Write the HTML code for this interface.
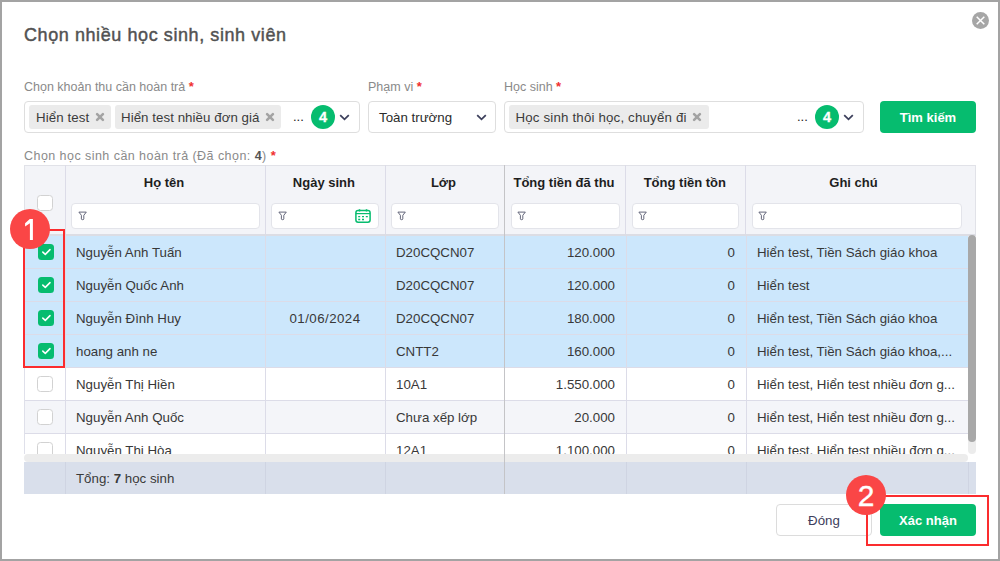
<!DOCTYPE html><html><head><meta charset="utf-8"><style>
*{box-sizing:border-box;margin:0;padding:0}
html,body{width:1000px;height:561px;overflow:hidden;background:#fff}
body{font-family:"Liberation Sans",sans-serif;position:relative;color:#333}
.a{position:absolute;white-space:nowrap}
.frame{position:absolute;left:0;top:0;width:1000px;height:561px;border:2px solid #a3a3a3;z-index:50}
.lbl{font-size:12.5px;color:#8a8a8a}
.req{color:#f0302f;font-weight:700;font-size:13px}
.box{position:absolute;border:1px solid #dedede;border-radius:4px;background:#fff}
.tag{position:absolute;height:24px;background:#ebebeb;border-radius:3px}
.tt{position:absolute;font-size:13.3px;color:#3b3b3b;line-height:16px;white-space:nowrap}
.badge{position:absolute;width:24px;height:24px;border-radius:50%;background:#06bc6f;color:#fff;font-weight:700;font-size:14.5px;text-align:center;line-height:25px;-webkit-text-stroke:0.3px #fff}
.btn{position:absolute;border-radius:4px;background:#06bc6f;color:#fff;font-weight:700;font-size:13px;text-align:center}
.hc{position:absolute;font-size:13px;font-weight:700;color:#1e1e1e;text-align:center;line-height:16px;white-space:nowrap}
.fi{position:absolute;height:26px;background:#fff;border:1px solid #e3e4ea;border-radius:4px}
.vl{position:absolute;width:1px;background:#dcdce8}
.hl{position:absolute;height:1px;background:#dcdce8}
.c{position:absolute;font-size:13.3px;color:#383838;white-space:nowrap;line-height:16px}
.cb{position:absolute;width:16px;height:16px;border-radius:3.5px}
.on{background:#06bc6f}
.off{background:#fff;border:1px solid #d2d2d2}
</style></head><body>
<div class="frame"></div>
<div class="a" style="left:24px;top:25px;font-size:18px;font-weight:400;color:#525252;letter-spacing:0.58px;line-height:20px;-webkit-text-stroke:0.45px #525252">Chọn nhiều học sinh, sinh viên</div>
<div class="a" style="left:971.5px;top:12px;width:17px;height:17px;border-radius:50%;background:#a6a6a6"><svg width="17" height="17" viewBox="0 0 17 17" style="position:absolute;left:0;top:0"><path d="M4.7 4.7L12.3 12.3M12.3 4.7L4.7 12.3" stroke="#fff" stroke-width="1.5"/></svg></div>
<div class="a lbl" style="left:24px;top:80px;line-height:14px">Chọn khoản thu cần hoàn trả <span class="req">*</span></div>
<div class="a lbl" style="left:368px;top:80px;line-height:14px">Phạm vi <span class="req">*</span></div>
<div class="a lbl" style="left:504px;top:80px;line-height:14px">Học sinh <span class="req">*</span></div>
<div class="box" style="left:24px;top:101px;width:336px;height:32px">
<div class="tag" style="left:4px;top:3px;width:82px"><div class="tt" style="left:7px;top:5px;letter-spacing:0.1px">Hiển test</div><svg width="10" height="10" viewBox="0 0 10 10" style="position:absolute;left:65.5px;top:7px"><path d="M2.1 2.1L7.9 7.9M7.9 2.1L2.1 7.9" stroke="#a3a3a3" stroke-width="2.6" stroke-linecap="round"/></svg></div>
<div class="tag" style="left:90px;top:3px;width:166px"><div class="tt" style="left:6px;top:5px;letter-spacing:0.05px">Hiển test nhiều đơn giá</div><svg width="10" height="10" viewBox="0 0 10 10" style="position:absolute;left:149.75px;top:7px"><path d="M2.1 2.1L7.9 7.9M7.9 2.1L2.1 7.9" stroke="#a3a3a3" stroke-width="2.6" stroke-linecap="round"/></svg></div>
<div class="a" style="left:268px;top:7px;font-size:13px;color:#1a1a1a;line-height:16px">...</div>
<div class="badge" style="left:286px;top:3px">4</div>
<svg width="11" height="7" viewBox="0 0 11 7" style="position:absolute;left:314.2px;top:11.8px"><path d="M1.2 1.2L5.5 5.3L9.8 1.2" fill="none" stroke="#3d405c" stroke-width="1.8"/></svg>
</div>
<div class="box" style="left:368px;top:101px;width:128px;height:32px">
<div class="tt" style="left:10px;top:8px;color:#2b2b2b">Toàn trường</div>
<svg width="11" height="7" viewBox="0 0 11 7" style="position:absolute;left:106.5px;top:11.8px"><path d="M1.2 1.2L5.5 5.3L9.8 1.2" fill="none" stroke="#3d405c" stroke-width="1.8"/></svg>
</div>
<div class="box" style="left:504px;top:101px;width:360px;height:32px">
<div class="tag" style="left:4px;top:3px;width:200px"><div class="tt" style="left:6.5px;top:5px;letter-spacing:0.17px">Học sinh thôi học, chuyển đi</div><svg width="10" height="10" viewBox="0 0 10 10" style="position:absolute;left:183.2px;top:7px"><path d="M2.1 2.1L7.9 7.9M7.9 2.1L2.1 7.9" stroke="#a3a3a3" stroke-width="2.6" stroke-linecap="round"/></svg></div>
<div class="a" style="left:292px;top:7px;font-size:13px;color:#1a1a1a;line-height:16px">...</div>
<div class="badge" style="left:310px;top:3px">4</div>
<svg width="11" height="7" viewBox="0 0 11 7" style="position:absolute;left:338.2px;top:11.8px"><path d="M1.2 1.2L5.5 5.3L9.8 1.2" fill="none" stroke="#3d405c" stroke-width="1.8"/></svg>
</div>
<div class="btn" style="left:880px;top:101px;width:96px;height:32px;line-height:34px">Tìm kiếm</div>
<div class="a lbl" style="left:24px;top:149px;line-height:14px;letter-spacing:0.45px">Chọn học sinh cần hoàn trả (Đã chọn: <b style="color:#555">4</b>) <span class="req">*</span></div>
<div class="a" style="left:24px;top:165px;width:952px;height:71px;background:#f3f4f8;border-top:1px solid #e1e2e8;border-left:1px solid #e1e2e8;border-right:1px solid #e1e2e8;border-bottom:2px solid #dcdde4"></div>
<div class="vl" style="left:65.0px;top:165px;height:69px"></div>
<div class="vl" style="left:265.0px;top:165px;height:69px"></div>
<div class="vl" style="left:384.8px;top:165px;height:69px"></div>
<div class="vl" style="left:504.1px;top:165px;height:69px"></div>
<div class="vl" style="left:625.0px;top:165px;height:69px"></div>
<div class="vl" style="left:745.0px;top:165px;height:69px"></div>
<div class="cb off" style="left:37px;top:195px;width:16px;height:16px"></div>
<div class="hc" style="left:64.0px;top:175px;width:200.0px">Họ tên</div>
<div class="hc" style="left:264.0px;top:175px;width:119.8px">Ngày sinh</div>
<div class="hc" style="left:383.8px;top:175px;width:119.3px">Lớp</div>
<div class="hc" style="left:503.1px;top:175px;width:121.8px">Tổng tiền đã thu</div>
<div class="hc" style="left:624.9px;top:175px;width:119.9px">Tổng tiền tồn</div>
<div class="hc" style="left:744.8px;top:175px;width:217.4px">Ghi chú</div>
<div class="fi" style="left:71.4px;top:203px;width:188.2px"><svg width="10" height="10" viewBox="0 0 10 10" style="position:absolute;left:5.5px;top:7.3px"><path d="M0.9 1.1H8.3L5.8 4.3V7.9Q5.8 8.7 4.6 8.7Q3.4 8.7 3.4 7.9V4.3Z" fill="none" stroke="#5c5f74" stroke-width="0.95" stroke-linejoin="round"/></svg></div>
<div class="fi" style="left:271.4px;top:203px;width:108.1px"><svg width="10" height="10" viewBox="0 0 10 10" style="position:absolute;left:5.5px;top:7.3px"><path d="M0.9 1.1H8.3L5.8 4.3V7.9Q5.8 8.7 4.6 8.7Q3.4 8.7 3.4 7.9V4.3Z" fill="none" stroke="#5c5f74" stroke-width="0.95" stroke-linejoin="round"/></svg></div>
<div class="fi" style="left:390.8px;top:203px;width:108.2px"><svg width="10" height="10" viewBox="0 0 10 10" style="position:absolute;left:5.5px;top:7.3px"><path d="M0.9 1.1H8.3L5.8 4.3V7.9Q5.8 8.7 4.6 8.7Q3.4 8.7 3.4 7.9V4.3Z" fill="none" stroke="#5c5f74" stroke-width="0.95" stroke-linejoin="round"/></svg></div>
<div class="fi" style="left:510.5px;top:203px;width:109.3px"><svg width="10" height="10" viewBox="0 0 10 10" style="position:absolute;left:5.5px;top:7.3px"><path d="M0.9 1.1H8.3L5.8 4.3V7.9Q5.8 8.7 4.6 8.7Q3.4 8.7 3.4 7.9V4.3Z" fill="none" stroke="#5c5f74" stroke-width="0.95" stroke-linejoin="round"/></svg></div>
<div class="fi" style="left:631.8px;top:203px;width:107.6px"><svg width="10" height="10" viewBox="0 0 10 10" style="position:absolute;left:5.5px;top:7.3px"><path d="M0.9 1.1H8.3L5.8 4.3V7.9Q5.8 8.7 4.6 8.7Q3.4 8.7 3.4 7.9V4.3Z" fill="none" stroke="#5c5f74" stroke-width="0.95" stroke-linejoin="round"/></svg></div>
<div class="fi" style="left:751.8px;top:203px;width:210.4px"><svg width="10" height="10" viewBox="0 0 10 10" style="position:absolute;left:5.5px;top:7.3px"><path d="M0.9 1.1H8.3L5.8 4.3V7.9Q5.8 8.7 4.6 8.7Q3.4 8.7 3.4 7.9V4.3Z" fill="none" stroke="#5c5f74" stroke-width="0.95" stroke-linejoin="round"/></svg></div>
<svg width="16" height="14" viewBox="0 0 16 14" style="position:absolute;left:355px;top:209px"><rect x="0.9" y="1.6" width="14.2" height="11.6" rx="2.2" fill="none" stroke="#06bc6f" stroke-width="1.5"/><path d="M0.9 4.6H15.1" stroke="#06bc6f" stroke-width="1.2"/><path d="M4.5 0.3V2.5M11.5 0.3V2.5" stroke="#06bc6f" stroke-width="1.5"/><path d="M3.2 7.6H5.2M7 7.6H9M10.8 7.6H12.8M3.2 10.5H5.2M7 10.5H9" stroke="#06bc6f" stroke-width="1.3"/></svg>
<div class="a" style="left:24px;top:236px;width:944px;height:218px;overflow:hidden">
<div class="a" style="left:0;top:0.0px;width:944px;height:33px;background:#cce7fc"></div>
<div class="hl" style="left:0;top:32.0px;width:944px"></div>
<div class="cb on" style="left:14px;top:8.0px"><svg width="16" height="16" viewBox="0 0 16 16" style="position:absolute;left:0;top:0"><path d="M4.8 8.1L7.3 10.4L12 5.6" fill="none" stroke="#fff" stroke-width="1.55" stroke-linecap="round" stroke-linejoin="round"/></svg></div>
<div class="c" style="left:52px;top:9.0px">Nguyễn Anh Tuấn</div>
<div class="c" style="left:372px;top:9.0px">D20CQCN07</div>
<div class="c" style="left:480px;top:9.0px;width:111px;text-align:right">120.000</div>
<div class="c" style="left:602px;top:9.0px;width:109px;text-align:right">0</div>
<div class="c" style="left:733px;top:9.0px">Hiển test, Tiền Sách giáo khoa</div>
<div class="a" style="left:0;top:32.5px;width:944px;height:33px;background:#cce7fc"></div>
<div class="hl" style="left:0;top:64.5px;width:944px"></div>
<div class="cb on" style="left:14px;top:40.5px"><svg width="16" height="16" viewBox="0 0 16 16" style="position:absolute;left:0;top:0"><path d="M4.8 8.1L7.3 10.4L12 5.6" fill="none" stroke="#fff" stroke-width="1.55" stroke-linecap="round" stroke-linejoin="round"/></svg></div>
<div class="c" style="left:52px;top:41.5px">Nguyễn Quốc Anh</div>
<div class="c" style="left:372px;top:41.5px">D20CQCN07</div>
<div class="c" style="left:480px;top:41.5px;width:111px;text-align:right">120.000</div>
<div class="c" style="left:602px;top:41.5px;width:109px;text-align:right">0</div>
<div class="c" style="left:733px;top:41.5px">Hiển test</div>
<div class="a" style="left:0;top:65.5px;width:944px;height:33px;background:#cce7fc"></div>
<div class="hl" style="left:0;top:97.5px;width:944px"></div>
<div class="cb on" style="left:14px;top:73.5px"><svg width="16" height="16" viewBox="0 0 16 16" style="position:absolute;left:0;top:0"><path d="M4.8 8.1L7.3 10.4L12 5.6" fill="none" stroke="#fff" stroke-width="1.55" stroke-linecap="round" stroke-linejoin="round"/></svg></div>
<div class="c" style="left:52px;top:74.5px">Nguyễn Đình Huy</div>
<div class="c" style="left:241px;top:74.5px;width:120px;text-align:center;letter-spacing:0.45px">01/06/2024</div>
<div class="c" style="left:372px;top:74.5px">D20CQCN07</div>
<div class="c" style="left:480px;top:74.5px;width:111px;text-align:right">180.000</div>
<div class="c" style="left:602px;top:74.5px;width:109px;text-align:right">0</div>
<div class="c" style="left:733px;top:74.5px">Hiển test, Tiền Sách giáo khoa</div>
<div class="a" style="left:0;top:98.5px;width:944px;height:33px;background:#cce7fc"></div>
<div class="hl" style="left:0;top:130.5px;width:944px"></div>
<div class="cb on" style="left:14px;top:106.5px"><svg width="16" height="16" viewBox="0 0 16 16" style="position:absolute;left:0;top:0"><path d="M4.8 8.1L7.3 10.4L12 5.6" fill="none" stroke="#fff" stroke-width="1.55" stroke-linecap="round" stroke-linejoin="round"/></svg></div>
<div class="c" style="left:52px;top:107.5px">hoang anh ne</div>
<div class="c" style="left:372px;top:107.5px">CNTT2</div>
<div class="c" style="left:480px;top:107.5px;width:111px;text-align:right">160.000</div>
<div class="c" style="left:602px;top:107.5px;width:109px;text-align:right">0</div>
<div class="c" style="left:733px;top:107.5px">Hiển test, Tiền Sách giáo khoa,...</div>
<div class="a" style="left:0;top:131.5px;width:944px;height:33px;background:#fff"></div>
<div class="hl" style="left:0;top:163.5px;width:944px"></div>
<div class="cb off" style="left:13px;top:140.0px"></div>
<div class="c" style="left:52px;top:140.5px">Nguyễn Thị Hiền</div>
<div class="c" style="left:372px;top:140.5px">10A1</div>
<div class="c" style="left:480px;top:140.5px;width:111px;text-align:right">1.550.000</div>
<div class="c" style="left:602px;top:140.5px;width:109px;text-align:right">0</div>
<div class="c" style="left:733px;top:140.5px">Hiển test, Hiển test nhiều đơn g...</div>
<div class="a" style="left:0;top:164.5px;width:944px;height:33px;background:#f4f5f9"></div>
<div class="hl" style="left:0;top:196.5px;width:944px"></div>
<div class="cb off" style="left:13px;top:173.0px"></div>
<div class="c" style="left:52px;top:173.5px">Nguyễn Anh Quốc</div>
<div class="c" style="left:372px;top:173.5px">Chưa xếp lớp</div>
<div class="c" style="left:480px;top:173.5px;width:111px;text-align:right">20.000</div>
<div class="c" style="left:602px;top:173.5px;width:109px;text-align:right">0</div>
<div class="c" style="left:733px;top:173.5px">Hiển test, Hiển test nhiều đơn g...</div>
<div class="a" style="left:0;top:197.5px;width:944px;height:33px;background:#fff"></div>
<div class="hl" style="left:0;top:229.5px;width:944px"></div>
<div class="cb off" style="left:13px;top:206.0px"></div>
<div class="c" style="left:52px;top:206.5px">Nguyễn Thị Hòa</div>
<div class="c" style="left:372px;top:206.5px">12A1</div>
<div class="c" style="left:480px;top:206.5px;width:111px;text-align:right">1.100.000</div>
<div class="c" style="left:602px;top:206.5px;width:109px;text-align:right">0</div>
<div class="c" style="left:733px;top:206.5px">Hiển test, Hiển test nhiều đơn g...</div>
<div class="vl" style="left:0;top:0;height:218px;background:#dfe0ea"></div>
<div class="vl" style="left:41.0px;top:0;height:218px"></div>
<div class="vl" style="left:241.0px;top:0;height:218px"></div>
<div class="vl" style="left:360.8px;top:0;height:218px"></div>
<div class="vl" style="left:480.1px;top:0;height:218px"></div>
<div class="vl" style="left:601.9px;top:0;height:218px"></div>
<div class="vl" style="left:721.8px;top:0;height:218px"></div>
</div>
<div class="a" style="left:968px;top:235px;width:8px;height:219px;background:#ececec;border-radius:4px"></div>
<div class="a" style="left:968px;top:235px;width:8px;height:207px;background:#a8a8a8;border-radius:4px"></div>
<div class="a" style="left:24px;top:454px;width:944px;height:7.5px;background:#ececec;border-radius:4px"></div>
<div class="a" style="left:24px;top:462px;width:952px;height:32px;background:#d9dfeb"></div>
<div class="vl" style="left:65.0px;top:462px;height:32px;background:#cfd4e2"></div>
<div class="vl" style="left:265.0px;top:462px;height:32px;background:#cfd4e2"></div>
<div class="vl" style="left:384.8px;top:462px;height:32px;background:#cfd4e2"></div>
<div class="vl" style="left:504.1px;top:462px;height:32px;background:#cfd4e2"></div>
<div class="vl" style="left:625.9px;top:462px;height:32px;background:#cfd4e2"></div>
<div class="vl" style="left:745.8px;top:462px;height:32px;background:#cfd4e2"></div>
<div class="vl" style="left:967.5px;top:462px;height:32px;background:#cfd4e2"></div>
<div class="c" style="left:76px;top:471px;color:#3a3a3a">Tổng: <b>7</b> học sinh</div>
<div class="a" style="left:776px;top:504px;width:96px;height:32px;border:1px solid #dcdcdc;border-radius:4px;background:#fff;font-size:13.3px;color:#3d405c;text-align:center;line-height:32px">Đóng</div>
<div class="btn" style="left:880px;top:504px;width:96px;height:32px;line-height:34px">Xác nhận</div>
<div class="a" style="left:504px;top:165px;width:1.2px;height:329px;background:#c4c4c7"></div>
<div class="a" style="left:23px;top:229px;width:42px;height:139px;border:2px solid #fb2c2e"></div>
<div class="a" style="left:10px;top:209px;width:40px;height:40px;border-radius:50%;background:#fa4646"><svg width="40" height="40" viewBox="0 0 40 40" style="position:absolute;left:0;top:0"><path d="M19.8 10H22.9V31H19.9V14.2L15.1 17.4V14.2Z" fill="#fff"/></svg></div>
<div class="a" style="left:866px;top:495px;width:123px;height:51px;border:2px solid #fb2c2e"></div>
<div class="a" style="left:846px;top:475px;width:40px;height:40px;border-radius:50%;background:#fa4646;color:#fff;font-size:30px;text-align:center;line-height:42px;-webkit-text-stroke:0.35px #fff">2</div>
</body></html>
